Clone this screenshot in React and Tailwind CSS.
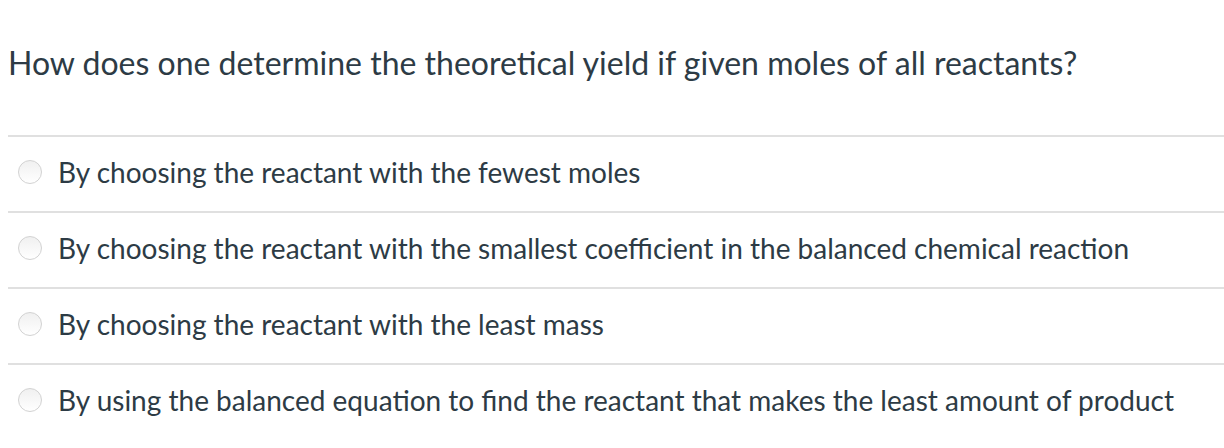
import React from 'react';

const answers = [
  'By choosing the reactant with the fewest moles',
  'By choosing the reactant with the smallest coefficient in the balanced chemical reaction',
  'By choosing the reactant with the least mass',
  'By using the balanced equation to find the reactant that makes the least amount of product',
];

const Radio = () => (
  <span className="inline-block w-[24px] h-[24px] rounded-full border border-[#d2d2d2] bg-gradient-to-b from-[#f0f0f0] to-white shrink-0" />
);

export default function App() {
  return (
    <div className="w-[1224px] h-[448px] bg-white overflow-hidden pl-2 text-[#2d3b45]" style={{ fontFamily: 'Lato, "Open Sans", sans-serif' }}>
      <div className="h-[135px] pt-[43px]">
        <h1 className="text-[32px] leading-[40px] font-normal">
          How does one determine the theoretical yield if given moles of all reactants?
        </h1>
      </div>
      {answers.map((a) => (
        <div key={a} className="border-t-2 border-[#e0e0e0] h-[76px] flex items-center gap-[16px] pl-[10px] pb-[5px]">
          <Radio />
          <span className="text-[28px] leading-[36px]">{a}</span>
        </div>
      ))}
    </div>
  );
}
